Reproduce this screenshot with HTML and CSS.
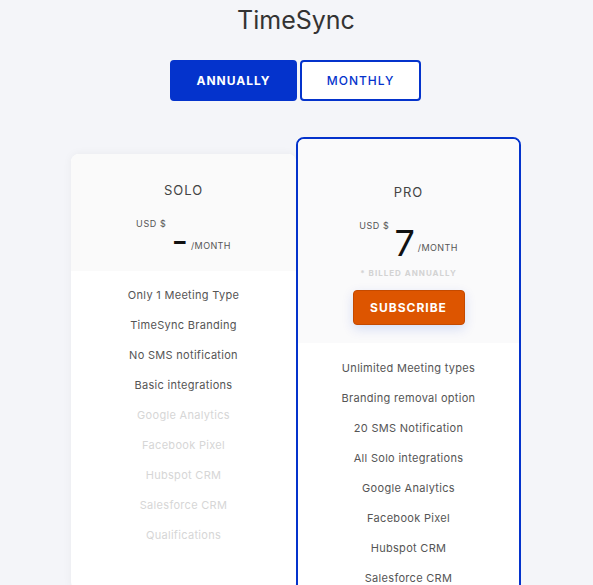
FILE: index.html
```html
<!DOCTYPE html>
<html lang="en">
<head>
  <meta charset="UTF-8">
  <meta name="viewport" content="width=device-width, initial-scale=1.0">
  <title>TimeSync Pricing</title>
  <link rel="stylesheet" href="styles.css">
</head>
<body>
  <div class="page">
    <h1 class="title">TimeSync</h1>

    <div class="billing-toggle">
      <button type="button" class="toggle-btn active">Annually</button>
      <button type="button" class="toggle-btn">Monthly</button>
    </div>

    <div class="plans">
      <div class="plan">
        <div class="plan-head">
          <div class="plan-name">SOLO</div>
          <div class="price">
            <span class="currency">USD $</span>
            <span class="amount">-</span>
            <span class="period">/MONTH</span>
          </div>
        </div>
        <ul class="features">
          <li>Only 1 Meeting Type</li>
          <li>TimeSync Branding</li>
          <li>No SMS notification</li>
          <li>Basic integrations</li>
          <li class="off">Google Analytics</li>
          <li class="off">Facebook Pixel</li>
          <li class="off">Hubspot CRM</li>
          <li class="off">Salesforce CRM</li>
          <li class="off">Qualifications</li>
        </ul>
      </div>

      <div class="plan pro">
        <div class="plan-head">
          <div class="plan-name">PRO</div>
          <div class="price">
            <span class="currency">USD $</span>
            <span class="amount">7</span>
            <span class="period">/MONTH</span>
          </div>
          <div class="billed">* Billed annually</div>
          <button type="button" class="subscribe-btn">Subscribe</button>
        </div>
        <ul class="features">
          <li>Unlimited Meeting types</li>
          <li>Branding removal option</li>
          <li>20 SMS Notification</li>
          <li>All Solo integrations</li>
          <li>Google Analytics</li>
          <li>Facebook Pixel</li>
          <li>Hubspot CRM</li>
          <li>Salesforce CRM</li>
          <li>Qualifications</li>
        </ul>
      </div>
    </div>
  </div>
</body>
</html>
```

FILE: styles.css
```css
body {
  margin: 0;
  padding: 0;
  background-color: #f4f5f9;
  font-family: Inter, "Noto Sans", Arial, sans-serif;
  color: #333;
}

.page {
  padding-top: 4px;
  padding-right: 1px;
}

.title {
  margin: 0;
  text-align: center;
  font-size: 25px;
  font-weight: 400;
  line-height: 32px;
  color: #333;
}

.billing-toggle {
  display: flex;
  justify-content: center;
  gap: 3px;
  margin-top: 24px;
  padding-right: 1px;
}

.toggle-btn {
  height: 41px;
  width: 121px;
  border: 2px solid #0433cc;
  border-radius: 4px;
  background-color: #fff;
  color: #0433cc;
  font-family: inherit;
  font-size: 12px;
  font-weight: 500;
  letter-spacing: 1px;
  text-transform: uppercase;
  cursor: pointer;
}

.toggle-btn.active {
  width: 127px;
  background-color: #0433cc;
  color: #fff;
  font-weight: 700;
}

.plans {
  display: flex;
  justify-content: center;
  align-items: flex-start;
  margin-top: 36px;
}

.plan {
  width: 225px;
  margin-top: 17px;
  background-color: #fff;
  border-radius: 8px;
  box-shadow: 0 0 10px rgba(0, 0, 0, 0.05);
  overflow: hidden;
}

.plan.pro {
  margin-top: 0;
  border: 2px solid #0433cc;
  box-sizing: border-box;
  box-shadow: none;
}

.plan-head {
  padding: 29px 0 12px;
  background-color: #fafafa;
  text-align: center;
}

.pro .plan-head {
  padding: 46px 0 18px;
  background-color: #fafafb;
}

.plan-name {
  font-size: 13px;
  line-height: 14px;
  letter-spacing: 1px;
  color: #444;
}

.price {
  display: flex;
  justify-content: center;
  align-items: flex-start;
  margin-top: 22px;
}

.currency {
  font-size: 9px;
  line-height: 10px;
  letter-spacing: 0.6px;
  color: #555;
}

.amount {
  margin: 4px 3px 0 5px;
  font-size: 36px;
  line-height: 36px;
  color: #111;
}

.period {
  align-self: flex-end;
  margin-bottom: 8px;
  font-size: 9px;
  line-height: 10px;
  letter-spacing: 0.4px;
  color: #555;
}

.billed {
  margin-top: 7px;
  font-size: 8px;
  line-height: 10px;
  font-weight: 700;
  letter-spacing: 1px;
  text-transform: uppercase;
  color: #d3d3d3;
}

.subscribe-btn {
  margin-top: 12px;
  width: 112px;
  height: 35px;
  border: 1px solid #c44a00;
  border-radius: 4px;
  background-color: #dd5500;
  color: #fff;
  font-family: inherit;
  font-size: 12px;
  font-weight: 700;
  letter-spacing: 1px;
  text-transform: uppercase;
  box-shadow: 0 4px 12px rgba(4, 51, 204, 0.15);
  cursor: pointer;
}

.features {
  list-style: none;
  margin: 0;
  padding: 9px 0 40px;
  text-align: center;
}

.pro .features {
  padding-top: 10px;
}

.features li {
  font-size: 11px;
  line-height: 30px;
  letter-spacing: 0.3px;
  color: #555;
}

.features li.off {
  color: #d6d6d6;
}
```
